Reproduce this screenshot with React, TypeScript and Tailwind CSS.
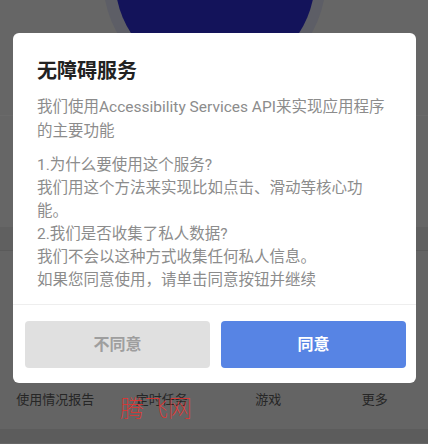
import { useState } from 'react';

const FONT = { fontFamily: 'Roboto, "Noto Sans CJK SC", sans-serif' };

const TABS = ['使用情况报告', '定时任务', '游戏', '更多'];

function ConsentDialog({ onChoose }: { onChoose: (agree: boolean) => void }) {
  return (
    <div className="absolute left-[13px] top-[33px] w-[403px] rounded-[6px] bg-white">
      <div className="px-6 pt-6 pb-3">
        <h2 className="text-[20px] leading-[28px] font-bold text-[#222]">无障碍服务</h2>
        <p className="mt-[10px] text-[15.5px] leading-[24px] text-[#8c8c8c]">
          我们使用Accessibility Services API来实现应用程序的主要功能
        </p>
        <p className="mt-[11px] text-[15.5px] leading-[23px] text-[#8c8c8c]">
          1.为什么要使用这个服务?
          <br />
          我们用这个方法来实现比如点击、滑动等核心功能。
          <br />
          2.我们是否收集了私人数据?
          <br />
          我们不会以这种方式收集任何私人信息。
          <br />
          如果您同意使用，请单击同意按钮并继续
        </p>
      </div>
      <div className="border-t border-[#eeeeee] pl-3 pr-[10px] pt-4 pb-[15px]">
        <div className="grid grid-cols-2 gap-[11px]">
          <button
            onClick={() => onChoose(false)}
            className="h-[47px] rounded-[4px] bg-[#e0e0e0] text-[16px] font-bold text-[#9e9e9e]"
          >
            不同意
          </button>
          <button
            onClick={() => onChoose(true)}
            className="h-[47px] rounded-[4px] bg-[#5784e4] text-[16px] font-bold text-white"
          >
            同意
          </button>
        </div>
      </div>
    </div>
  );
}

export default function App() {
  const [open, setOpen] = useState(true);

  return (
    <div className="relative h-[444px] w-[428px] overflow-hidden bg-[#666666]" style={FONT}>
      {/* dimmed page underneath */}
      <div className="relative h-[116px] overflow-hidden border-b border-[#6a6a6a]">
        <div className="absolute left-[103px] top-[-133px] flex h-[223px] w-[223px] items-center justify-center rounded-full bg-[#5d5e66]">
          <div className="h-[200px] w-[200px] rounded-full bg-[#13135a]" />
        </div>
      </div>
      <div className="h-[111px]" />
      <div className="h-[24px] border-b border-[#5a5a5a] bg-[#606060]" />
      <div className="flex h-[178px] flex-col justify-end bg-[#646464] pb-[19px]">
        <div className="grid grid-cols-4 pl-[2px]">
          {TABS.map((t) => (
            <span key={t} className="text-center text-[13px] leading-[20px] text-[#262626]">
              {t}
            </span>
          ))}
        </div>
      </div>
      <div className="h-[14px] bg-[#5c5c5c]" />

      {/* watermark */}
      <span className="pointer-events-none absolute left-[120px] top-[395px] text-[24px] leading-[28px] font-thin text-[#e8322f]">
        腾飞网
      </span>

      {open && <ConsentDialog onChoose={() => setOpen(true)} />}
    </div>
  );
}
